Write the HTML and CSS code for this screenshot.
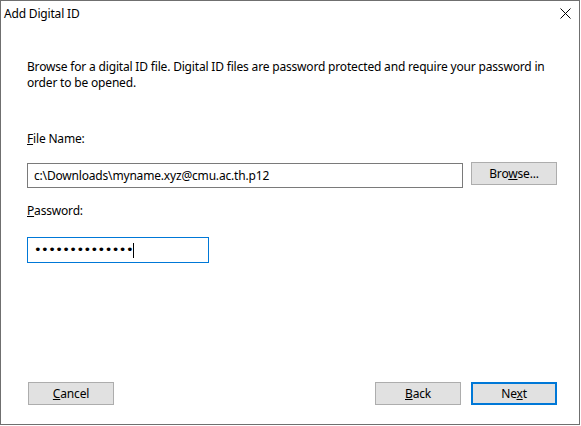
FILE: index.html
```html
<!DOCTYPE html>
<html>
<head>
<meta charset="utf-8">
<link rel="stylesheet" href="styles.css">
</head>
<body>
<div class="window">
  <div class="titlebar">
    <span class="title">Add Digital ID</span>
    <svg class="close" width="11" height="11" viewBox="0 0 11 11"><path d="M0.5 0.5 L10.5 10.5 M10.5 0.5 L0.5 10.5" stroke="#000" stroke-width="1" fill="none"/></svg>
  </div>
  <div class="content">
    <p class="intro">Browse for a digital ID file. Digital ID files are password protected and require your password in<br>order to be opened.</p>
    <div class="label label-file"><u>F</u>ile Name:</div>
    <div class="file-row">
      <div class="input file-input">c:\Downloads\myname.xyz@cmu.ac.th.p12</div>
      <button class="btn browse">Bro<u>w</u>se...</button>
    </div>
    <div class="label label-pass"><u>P</u>assword:</div>
    <div class="input pass-input"><span class="dots">••••••••••••••</span><span class="caret"></span></div>
  </div>
  <div class="footer">
    <button class="btn"><u>C</u>ancel</button>
    <div class="spacer"></div>
    <button class="btn"><u>B</u>ack</button>
    <button class="btn default">Ne<u>x</u>t</button>
  </div>
</div>
</body>
</html>
```
FILE: styles.css
```css
html, body {
  margin: 0;
  padding: 0;
  background: #ffffff;
}
body {
  font-family: "Noto Sans", "Open Sans", sans-serif;
  font-size: 12px;
  letter-spacing: -0.18px;
  color: #000;
}
.window {
  width: 580px;
  height: 425px;
  box-sizing: border-box;
  border: 1px solid #6f6f6f;
  background: #fff;
  display: flex;
  flex-direction: column;
}
.titlebar {
  height: 29px;
  box-sizing: border-box;
  padding: 5px 8px 0 3px;
  display: flex;
  justify-content: space-between;
  align-items: flex-start;
  line-height: 16px;
}
.close {
  margin-top: 2px;
}
.content {
  flex: 1;
  padding: 0 22px 0 26px;
  display: flex;
  flex-direction: column;
  align-items: flex-start;
}
.intro {
  margin: 29px 0 0 0;
  line-height: 16px;
  white-space: nowrap;
}
.label {
  line-height: 16px;
}
.label-file {
  margin-top: 40px;
}
.label-pass {
  margin-top: 15px;
}
.file-row {
  margin-top: 16px;
  display: flex;
  align-items: flex-start;
  gap: 8px;
  width: 530px;
}
.input {
  box-sizing: border-box;
  border: 1px solid #7a7a7a;
  background: #fff;
  height: 25px;
  padding: 0 6px;
  line-height: 23px;
  white-space: nowrap;
}
.file-input {
  flex: 1;
}
.pass-input {
  margin-top: 18px;
  width: 182px;
  height: 26px;
  border-color: #0078d7;
  display: flex;
  align-items: center;
  line-height: 24px;
}
.dots {
  font-family: "DejaVu Sans", sans-serif;
  font-size: 13px;
  letter-spacing: -0.6px;
}
.caret {
  display: inline-block;
  width: 1px;
  height: 15px;
  background: #000;
  margin-left: 0;
}
.btn {
  width: 86px;
  height: 23px;
  box-sizing: border-box;
  border: 1px solid #adadad;
  background: #e1e1e1;
  font-family: inherit;
  font-size: 12px;
  letter-spacing: inherit;
  color: #000;
  padding: 0;
  line-height: 20px;
}
.browse {
  margin-top: -1px;
}
.footer {
  display: flex;
  align-items: flex-start;
  padding: 0 22px 19px 27px;
  gap: 10px;
}
.spacer {
  flex: 1;
}
.default {
  border: 2px solid #0078d7;
}
```
